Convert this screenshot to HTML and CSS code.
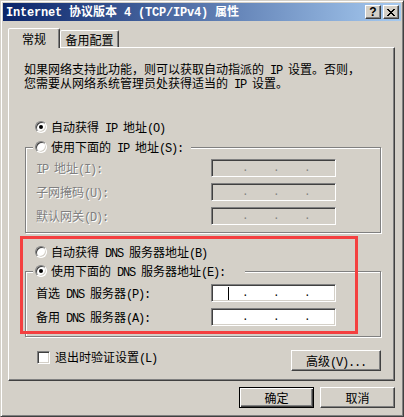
FILE: index.html
```html
<!DOCTYPE html>
<html lang="zh-CN">
<head>
<meta charset="utf-8">
<title>Internet 协议版本 4 (TCP/IPv4) 属性</title>
<link rel="stylesheet" href="styles.css">
</head>
<body>
<div class="window">
  <div class="titlebar">
    <div class="title"><span class="en">Internet </span>协议版本<span class="en"> 4 (TCP/IPv4) </span>属性</div>
    <div class="tbtns">
      <div class="tbtn help">?</div>
      <div class="tbtn"><svg width="8" height="7" viewBox="0 0 8 7"><path d="M0 0h2v1H0zM6 0h2v1H6zM1 1h2v1H1zM5 1h2v1H5zM2 2h4v1H2zM3 3h2v1H3zM2 4h4v1H2zM1 5h2v1H1zM5 5h2v1H5zM0 6h2v1H0zM6 6h2v1H6z" fill="#000"/></svg></div>
    </div>
  </div>
  <div class="content">
    <div class="tabs">
      <div class="tab active">常规</div>
      <div class="tab">备用配置</div>
    </div>
    <div class="panel">
      <p class="desc">如果网络支持此功能，则可以获取自动指派的<span class="en"> IP </span>设置。否则，<br>您需要从网络系统管理员处获得适当的<span class="en"> IP </span>设置。</p>

      <div class="opt r1"><span class="radio checked"></span><span class="txt">自动获得<span class="en"> IP </span>地址<span class="en">(O)</span></span></div>

      <div class="group g1">
        <div class="legend l1"><span class="radio"></span><span class="txt">使用下面的<span class="en"> IP </span>地址<span class="en">(S):</span></span></div>
        <div class="frow dis">
          <span class="lbl"><span class="en">IP </span>地址<span class="en">(I):</span></span>
          <div class="ip off"><span class="oct"></span><span class="dot">.</span><span class="oct"></span><span class="dot">.</span><span class="oct"></span><span class="dot">.</span><span class="oct"></span></div>
        </div>
        <div class="frow dis">
          <span class="lbl">子网掩码<span class="en">(U):</span></span>
          <div class="ip off"><span class="oct"></span><span class="dot">.</span><span class="oct"></span><span class="dot">.</span><span class="oct"></span><span class="dot">.</span><span class="oct"></span></div>
        </div>
        <div class="frow dis">
          <span class="lbl">默认网关<span class="en">(D):</span></span>
          <div class="ip off"><span class="oct"></span><span class="dot">.</span><span class="oct"></span><span class="dot">.</span><span class="oct"></span><span class="dot">.</span><span class="oct"></span></div>
        </div>
      </div>

      <div class="opt r3"><span class="radio"></span><span class="txt">自动获得<span class="en"> DNS </span>服务器地址<span class="en">(B)</span></span></div>

      <div class="group g2">
        <div class="legend l2"><span class="radio checked"></span><span class="txt">使用下面的<span class="en"> DNS </span>服务器地址<span class="en">(E):</span></span></div>
        <div class="frow">
          <span class="lbl">首选<span class="en"> DNS </span>服务器<span class="en">(P):</span></span>
          <div class="ip"><span class="oct"><span class="caret"></span></span><span class="dot">.</span><span class="oct"></span><span class="dot">.</span><span class="oct"></span><span class="dot">.</span><span class="oct"></span></div>
        </div>
        <div class="frow">
          <span class="lbl">备用<span class="en"> DNS </span>服务器<span class="en">(A):</span></span>
          <div class="ip"><span class="oct"></span><span class="dot">.</span><span class="oct"></span><span class="dot">.</span><span class="oct"></span><span class="dot">.</span><span class="oct"></span></div>
        </div>
      </div>

      <div class="bottom-row">
        <div class="chk-label"><span class="check"></span><span class="txt">退出时验证设置<span class="en">(L)</span></span></div>
        <div class="btn adv"><span class="txt">高级<span class="en">(V)...</span></span></div>
      </div>

      <div class="mark"></div>
    </div>
    <div class="actions">
      <div class="btn default">确定</div>
      <div class="btn">取消</div>
    </div>
  </div>
</div>
</body>
</html>
```

FILE: styles.css
```css
html, body {
  margin: 0;
  padding: 0;
  background: #d4d0c8;
}
body {
  font-family: "Noto Sans CJK SC", sans-serif;
  font-size: 12px;
  color: #000;
}
.en {
  font-family: "Liberation Mono", monospace;
  font-size: 12px;
  letter-spacing: -1.2px;
}
.txt {
  white-space: pre;
}

.window {
  width: 404px;
  height: 417px;
  box-sizing: border-box;
  border: 1px solid;
  border-color: #d4d0c8 #404040 #404040 #d4d0c8;
  box-shadow: inset 1px 1px 0 #fff, inset -1px -1px 0 #808080;
  padding: 2px;
  background: #d4d0c8;
}

.titlebar {
  height: 18px;
  background: linear-gradient(to right, #0a246a, #a6caf0);
  display: flex;
  align-items: center;
  padding: 0 2px 0 3px;
}
.title {
  flex: 1;
  color: #fff;
  font-weight: bold;
  white-space: nowrap;
  line-height: 18px;
}
.title .en {
  font-size: 12px;
  letter-spacing: -0.2px;
}
.tbtns {
  display: flex;
  gap: 2px;
}
.tbtn {
  width: 16px;
  height: 14px;
  box-sizing: border-box;
  background: #d4d0c8;
  border: 1px solid;
  border-color: #fff #404040 #404040 #fff;
  box-shadow: inset -1px -1px 0 #808080;
  display: flex;
  align-items: center;
  justify-content: center;
}
.tbtn.help {
  font: bold 12px "Liberation Sans", sans-serif;
  line-height: 12px;
  padding-bottom: 1px;
}

.content {
  padding: 0 6px 0 5px;
}

.tabs {
  display: flex;
  align-items: flex-end;
  height: 20px;
  margin-top: 7px;
  position: relative;
  z-index: 1;
}
.tab {
  height: 17px;
  width: 59px;
  margin-bottom: 1px;
  box-sizing: border-box;
  border: 1px solid;
  border-bottom: none;
  border-color: #fff #404040 transparent #fff;
  box-shadow: inset -1px 0 0 #808080;
  border-radius: 2px 2px 0 0;
  background: #d4d0c8;
  display: flex;
  align-items: center;
  justify-content: center;
  padding-top: 1px;
}
.tab.active {
  height: 20px;
  width: 52px;
  margin-bottom: 0;
  padding-top: 0;
}

.panel {
  position: relative;
  height: 334px;
  box-sizing: border-box;
  margin-top: -1px;
  border: 1px solid;
  border-color: #fff #404040 #404040 #fff;
  box-shadow: inset -1px -1px 0 #808080;
  padding: 15px 13px 0 15px;
  display: flex;
  flex-direction: column;
}

.desc {
  margin: 0;
  line-height: 12px;
  white-space: nowrap;
}

.opt {
  display: flex;
  align-items: center;
  height: 16px;
  margin-left: 11px;
  white-space: nowrap;
}
.r1 { margin-top: 28px; }
.r3 { margin-top: 11px; }

.radio {
  flex: none;
  position: relative;
  width: 12px;
  height: 12px;
  box-sizing: border-box;
  border-radius: 50%;
  background: #fff;
  border: 1px solid;
  border-color: #808080 #fff #fff #808080;
  box-shadow: inset 1px 1px 0 #404040, inset -1px -1px 0 #d4d0c8;
  margin-right: 4px;
}
.radio.checked::after {
  content: "";
  position: absolute;
  left: 3px;
  top: 3px;
  width: 4px;
  height: 4px;
  border-radius: 50%;
  background: #000;
}

.group {
  margin: 12px 0 0 1px;
  border: 1px solid #808080;
  box-shadow: inset 1px 1px 0 #fff, 1px 1px 0 #fff;
  padding: 0 44px 7px 10px;
  display: flex;
  flex-direction: column;
}
.g2 {
  margin-top: 11px;
  padding-bottom: 10px;
}
.legend {
  display: flex;
  align-items: center;
  align-self: flex-start;
  height: 16px;
  margin: -9px 0 0 -3px;
  padding: 0 8px 0 2px;
  background: #d4d0c8;
  white-space: nowrap;
}
.l2 { padding-right: 20px; }

.frow {
  display: flex;
  align-items: center;
  justify-content: space-between;
  height: 18px;
  margin-top: 6px;
  white-space: nowrap;
}
.legend + .frow { margin-top: 4px; }
.g2 .legend + .frow { margin-top: 5px; }
.lbl {
  white-space: pre;
}
.frow.dis .lbl {
  color: #808080;
  text-shadow: 1px 1px 0 #fff;
}

.ip {
  width: 125px;
  height: 18px;
  box-sizing: border-box;
  border: 1px solid;
  border-color: #808080 #fff #fff #808080;
  box-shadow: inset 1px 1px 0 #404040, inset -1px -1px 0 #d4d0c8;
  background: #fff;
  display: flex;
  align-items: center;
  padding-left: 1px;
}
.ip.off {
  background: #d4d0c8;
  color: #808080;
}
.ip .oct {
  width: 25px;
  display: flex;
  align-items: center;
}
.ip .oct:first-child { width: 29px; }
.ip .oct:last-child { flex: 1; }
.ip .dot {
  width: 6px;
  text-align: center;
  font-family: "Liberation Mono", monospace;
  font-size: 11px;
  line-height: 14px;
}
.caret {
  display: block;
  width: 1px;
  height: 13px;
  background: #000;
  margin-left: 15px;
}

.bottom-row {
  display: flex;
  align-items: flex-start;
  margin-top: 13px;
}
.chk-label {
  display: flex;
  align-items: center;
  height: 16px;
  margin: -1px 0 0 13px;
  white-space: nowrap;
}
.check {
  flex: none;
  width: 13px;
  height: 13px;
  box-sizing: border-box;
  background: #fff;
  border: 1px solid;
  border-color: #808080 #fff #fff #808080;
  box-shadow: inset 1px 1px 0 #404040, inset -1px -1px 0 #d4d0c8;
  margin-right: 5px;
}

.btn {
  width: 75px;
  height: 21px;
  box-sizing: border-box;
  background: #d4d0c8;
  border: 1px solid;
  border-color: #fff #404040 #404040 #fff;
  box-shadow: inset -1px -1px 0 #808080;
  display: flex;
  align-items: center;
  justify-content: center;
  white-space: nowrap;
}
.btn.adv {
  margin-left: auto;
  width: 90px;
}
.btn.default {
  border-color: #000;
  box-shadow: inset 1px 1px 0 #fff, inset -1px -1px 0 #404040, inset -2px -2px 0 #808080;
}

.actions {
  display: flex;
  justify-content: flex-end;
  gap: 6px;
  margin-top: 6px;
}

.mark {
  position: absolute;
  left: 11px;
  top: 188px;
  width: 338px;
  height: 98px;
  box-sizing: border-box;
  border: 3px solid #f44040;
  pointer-events: none;
}
```
